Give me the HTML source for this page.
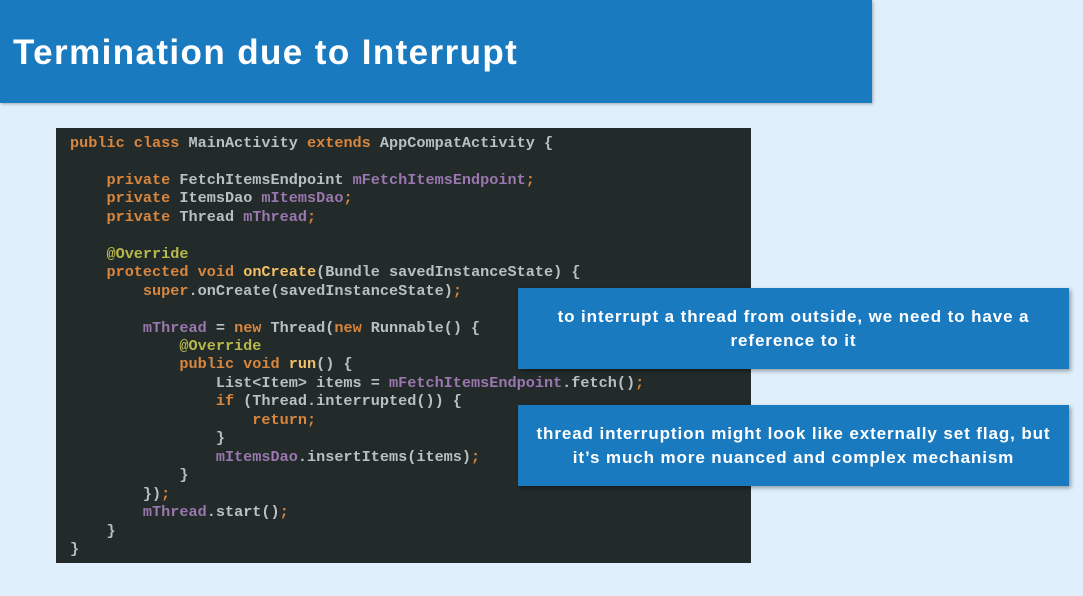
<!DOCTYPE html>
<html><head><style>
body{margin:0;width:1083px;height:596px;background:#dfeffb;position:relative;overflow:hidden;font-family:"Liberation Sans",sans-serif}
.title{position:absolute;left:0;top:0;width:872px;height:103px;background:#1a7abf;color:#fff;font-weight:bold;font-size:35px;letter-spacing:1.4px;line-height:106px;padding-left:13px;box-sizing:border-box;box-shadow:1px 1px 3px rgba(0,0,0,.3)}
.code{position:absolute;left:56px;top:128px;width:695px;height:435px;background:#222a2a;}
pre{margin:0;position:absolute;left:14px;top:6px;font-family:"Liberation Mono",monospace;font-size:15.2px;line-height:18.45px;color:#b9c0c4;font-weight:bold}
.k{color:#d9863e}.v{color:#9a77ae}.a{color:#b8b84a}.f{color:#f2c068}
.box{position:absolute;left:518px;width:551px;height:81px;background:#1a7abf;color:#fff;font-weight:bold;font-size:17px;letter-spacing:0.9px;line-height:24px;text-align:center;display:flex;align-items:center;justify-content:center;box-shadow:2px 2px 4px rgba(0,0,0,.35)}
</style></head><body>
<div class="title">Termination due to Interrupt</div>
<div class="code"><pre><span class="k">public class</span> MainActivity <span class="k">extends</span> AppCompatActivity {

    <span class="k">private</span> FetchItemsEndpoint <span class="v">mFetchItemsEndpoint</span><span class="k">;</span>
    <span class="k">private</span> ItemsDao <span class="v">mItemsDao</span><span class="k">;</span>
    <span class="k">private</span> Thread <span class="v">mThread</span><span class="k">;</span>

    <span class="a">@Override</span>
    <span class="k">protected void</span> <span class="f">onCreate</span>(Bundle savedInstanceState) {
        <span class="k">super</span>.onCreate(savedInstanceState)<span class="k">;</span>

        <span class="v">mThread</span> = <span class="k">new</span> Thread(<span class="k">new</span> Runnable() {
            <span class="a">@Override</span>
            <span class="k">public void</span> <span class="f">run</span>() {
                List&lt;Item&gt; items = <span class="v">mFetchItemsEndpoint</span>.fetch()<span class="k">;</span>
                <span class="k">if</span> (Thread.interrupted()) {
                    <span class="k">return;</span>
                }
                <span class="v">mItemsDao</span>.insertItems(items)<span class="k">;</span>
            }
        })<span class="k">;</span>
        <span class="v">mThread</span>.start()<span class="k">;</span>
    }
}</pre></div>
<div class="box" style="top:288px">to interrupt a thread from outside, we need to have a<br>reference to it</div>
<div class="box" style="top:405px">thread interruption might look like externally set flag, but<br>it’s much more nuanced and complex mechanism</div>
</body></html>
